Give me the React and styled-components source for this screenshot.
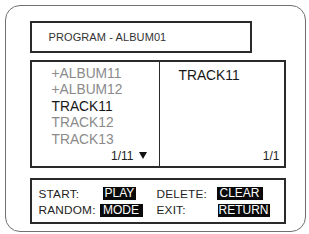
import React from 'react'
import styled, { createGlobalStyle } from 'styled-components'

const GlobalStyle = createGlobalStyle`
  body {
    margin: 0;
    background: #fff;
    font-family: 'Liberation Sans', Arial, sans-serif;
  }
`

const leftItems = [
  { text: '+ALBUM11', dim: true },
  { text: '+ALBUM12', dim: true },
  { text: 'TRACK11', dim: false },
  { text: 'TRACK12', dim: true },
  { text: 'TRACK13', dim: true },
]

const App = () => {
  return (
    <>
      <GlobalStyle />
      <Frame>
        <TitleBox>PROGRAM - ALBUM01</TitleBox>
        <ListBox>
          <Panel>
            <Items>
              {leftItems.map((it) => (
                <Item key={it.text} dim={it.dim}>{it.text}</Item>
              ))}
            </Items>
            <Pager>
              1/11
              <Arrow viewBox="0 0 8 7">
                <path d="M0 0 L8 0 L4 7 Z" fill="#111" />
              </Arrow>
            </Pager>
          </Panel>
          <Panel right>
            <Items indent>
              <Item>TRACK11</Item>
            </Items>
            <Pager right>1/1</Pager>
          </Panel>
        </ListBox>
        <HelpBox>
          <Label>START:</Label>
          <KeyCell><Key shift={3} pad={2}>PLAY</Key></KeyCell>
          <Label>DELETE:</Label>
          <KeyCell><Key shift={0} pad={3}>CLEAR</Key></KeyCell>
          <Label>RANDOM:</Label>
          <KeyCell><Key shift={0} pad={3.5}>MODE</Key></KeyCell>
          <Label>EXIT:</Label>
          <KeyCell><Key shift={1} pad={1}>RETURN</Key></KeyCell>
        </HelpBox>
      </Frame>
    </>
  )
}

const Frame = styled.div`
  box-sizing: border-box;
  margin: 5px 0 0 5px;
  width: 301px;
  height: 227px;
  border: 1.5px solid #707070;
  border-radius: 15px;
  padding: 14.5px 0 0 23.5px;
  display: flex;
  flex-direction: column;
`

const TitleBox = styled.div`
  box-sizing: border-box;
  width: 222px;
  height: 32px;
  border: 2px solid #2a2a2a;
  display: flex;
  align-items: center;
  padding-left: 17px;
  font-size: 11px;
  color: #333;
  letter-spacing: 0.1px;
`

const ListBox = styled.div`
  box-sizing: border-box;
  margin-top: 7px;
  width: 256px;
  height: 108px;
  border: 2px solid #2a2a2a;
  display: grid;
  grid-template-columns: 127px 1fr;
`

const Panel = styled.div`
  display: flex;
  flex-direction: column;
  justify-content: space-between;
  border-left: ${(p) => (p.right ? '1.5px solid #2a2a2a' : 'none')};
  padding: 4px ${(p) => (p.right ? '4px' : '12px')} 3px 0;
`

const Items = styled.div`
  display: flex;
  flex-direction: column;
  padding-left: ${(p) => (p.indent ? '19px' : '20px')};
  padding-top: ${(p) => (p.indent ? '2px' : '0')};
`

const Item = styled.div`
  font-size: 13.8px;
  line-height: 16.5px;
  color: ${(p) => (p.dim ? '#8a8a8a' : '#161616')};
`

const Pager = styled.div`
  align-self: flex-end;
  display: flex;
  align-items: center;
  gap: 5px;
  font-size: 12px;
  color: #222;
`

const Arrow = styled.svg`
  width: 8px;
  height: 7px;
`

const HelpBox = styled.div`
  box-sizing: border-box;
  margin-top: 10px;
  width: 256px;
  height: 46px;
  border: 2px solid #2a2a2a;
  padding: 6px 0 0 7px;
  display: grid;
  grid-template-columns: 61px 57px 60px auto;
  grid-auto-rows: 16.5px;
  align-items: center;
  font-size: 11.8px;
  color: #222;
`

const Label = styled.span`
  letter-spacing: 0.2px;
`

const KeyCell = styled.span`
  display: flex;
`

const Key = styled.span`
  background: #0a0a0a;
  color: #fff;
  font-size: 12px;
  line-height: 13px;
  padding: 0 ${(p) => p.pad}px;
  margin-left: ${(p) => p.shift}px;
`

export default App
